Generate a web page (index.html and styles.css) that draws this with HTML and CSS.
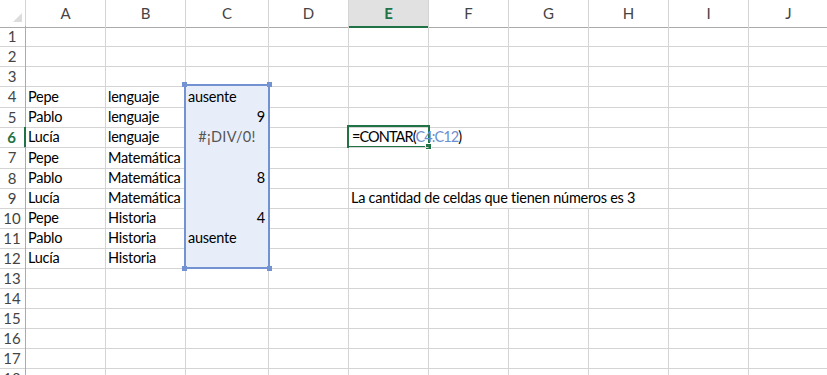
FILE: index.html
```html
<!DOCTYPE html>
<html lang="es">
<head>
<meta charset="utf-8">
<title>Hoja1</title>
<link rel="stylesheet" href="styles.css">
</head>
<body>
<div class="sheet">
  <div class="row head">
    <div class="corner"><svg width="26" height="26" viewBox="0 0 26 26"><polygon points="13,22 22,22 22,13" fill="#dcdcdc"/></svg></div>
    <div class="ch">A</div><div class="ch">B</div><div class="ch">C</div><div class="ch">D</div>
    <div class="ch on">E</div><div class="ch">F</div><div class="ch">G</div><div class="ch">H</div>
    <div class="ch">I</div><div class="ch">J</div>
  </div>

  <div class="row"><div class="rh">1</div><div class="c"></div><div class="c"></div><div class="c"></div><div class="c"></div><div class="c"></div><div class="c"></div><div class="c"></div><div class="c"></div><div class="c"></div><div class="c"></div></div>
  <div class="row"><div class="rh">2</div><div class="c"></div><div class="c"></div><div class="c"></div><div class="c"></div><div class="c"></div><div class="c"></div><div class="c"></div><div class="c"></div><div class="c"></div><div class="c"></div></div>
  <div class="row"><div class="rh">3</div><div class="c"></div><div class="c"></div><div class="c"></div><div class="c"></div><div class="c"></div><div class="c"></div><div class="c"></div><div class="c"></div><div class="c"></div><div class="c"></div></div>
  <div class="row tall"><div class="rh">4</div><div class="c">Pepe</div><div class="c">lenguaje</div><div class="c sel">ausente</div><div class="c"></div><div class="c"></div><div class="c"></div><div class="c"></div><div class="c"></div><div class="c"></div><div class="c"></div></div>
  <div class="row"><div class="rh">5</div><div class="c">Pablo</div><div class="c">lenguaje</div><div class="c sel num">9</div><div class="c"></div><div class="c"></div><div class="c"></div><div class="c"></div><div class="c"></div><div class="c"></div><div class="c"></div></div>
  <div class="row"><div class="rh on">6</div><div class="c">Lucía</div><div class="c">lenguaje</div><div class="c sel err">#¡DIV/0!</div><div class="c"></div><div class="c spill formula">=CONTAR(<span class="ref">C4:C12</span>)</div><div class="c"></div><div class="c"></div><div class="c"></div><div class="c"></div><div class="c"></div></div>
  <div class="row tall"><div class="rh">7</div><div class="c">Pepe</div><div class="c">Matemática</div><div class="c sel"></div><div class="c"></div><div class="c"></div><div class="c"></div><div class="c"></div><div class="c"></div><div class="c"></div><div class="c"></div></div>
  <div class="row"><div class="rh">8</div><div class="c">Pablo</div><div class="c">Matemática</div><div class="c sel num">8</div><div class="c"></div><div class="c"></div><div class="c"></div><div class="c"></div><div class="c"></div><div class="c"></div><div class="c"></div></div>
  <div class="row"><div class="rh">9</div><div class="c">Lucía</div><div class="c">Matemática</div><div class="c sel"></div><div class="c"></div><div class="c spill">La cantidad de celdas que tienen números es 3</div><div class="c spill"></div><div class="c spill"></div><div class="c"></div><div class="c"></div><div class="c"></div></div>
  <div class="row"><div class="rh">10</div><div class="c">Pepe</div><div class="c">Historia</div><div class="c sel num">4</div><div class="c"></div><div class="c"></div><div class="c"></div><div class="c"></div><div class="c"></div><div class="c"></div><div class="c"></div></div>
  <div class="row"><div class="rh">11</div><div class="c">Pablo</div><div class="c">Historia</div><div class="c sel">ausente</div><div class="c"></div><div class="c"></div><div class="c"></div><div class="c"></div><div class="c"></div><div class="c"></div><div class="c"></div></div>
  <div class="row"><div class="rh">12</div><div class="c">Lucía</div><div class="c">Historia</div><div class="c sel"></div><div class="c"></div><div class="c"></div><div class="c"></div><div class="c"></div><div class="c"></div><div class="c"></div><div class="c"></div></div>
  <div class="row"><div class="rh">13</div><div class="c"></div><div class="c"></div><div class="c"></div><div class="c"></div><div class="c"></div><div class="c"></div><div class="c"></div><div class="c"></div><div class="c"></div><div class="c"></div></div>
  <div class="row"><div class="rh">14</div><div class="c"></div><div class="c"></div><div class="c"></div><div class="c"></div><div class="c"></div><div class="c"></div><div class="c"></div><div class="c"></div><div class="c"></div><div class="c"></div></div>
  <div class="row"><div class="rh">15</div><div class="c"></div><div class="c"></div><div class="c"></div><div class="c"></div><div class="c"></div><div class="c"></div><div class="c"></div><div class="c"></div><div class="c"></div><div class="c"></div></div>
  <div class="row"><div class="rh">16</div><div class="c"></div><div class="c"></div><div class="c"></div><div class="c"></div><div class="c"></div><div class="c"></div><div class="c"></div><div class="c"></div><div class="c"></div><div class="c"></div></div>
  <div class="row"><div class="rh">17</div><div class="c"></div><div class="c"></div><div class="c"></div><div class="c"></div><div class="c"></div><div class="c"></div><div class="c"></div><div class="c"></div><div class="c"></div><div class="c"></div></div>
  <div class="row"><div class="rh">18</div><div class="c"></div><div class="c"></div><div class="c"></div><div class="c"></div><div class="c"></div><div class="c"></div><div class="c"></div><div class="c"></div><div class="c"></div><div class="c"></div></div>

  <!-- highlighted reference range C4:C12 -->
  <div class="range-box">
    <span class="knob tl"></span><span class="knob tr"></span>
    <span class="knob bl"></span><span class="knob br"></span>
  </div>
  <!-- active cell E6 -->
  <div class="active-box"><span class="fill-handle"></span></div>
</div>
</body>
</html>
```

FILE: styles.css
```css
html, body {
  margin: 0;
  padding: 0;
  background: #fff;
  overflow: hidden;
}

.sheet {
  position: relative;
  width: 827px;
  height: 375px;
  overflow: hidden;
  font-family: Lato, "Liberation Sans", sans-serif;
  font-size: 14.5px;
  letter-spacing: -0.25px;
  color: #000;
}

.row {
  display: grid;
  grid-template-columns: 26px 80px 80px 83px repeat(7, 80px);
  height: 20px;
}
.row.tall { height: 21px; }

.row.head {
  height: 26px;
}

.corner {
  border-right: 1px solid #d4d4d4;
  border-bottom: 1px solid #ababab;
  box-sizing: border-box;
}
.corner svg { display: block; }

.ch {
  box-sizing: border-box;
  border-right: 1px solid #d4d4d4;
  border-bottom: 1px solid #ababab;
  text-align: center;
  line-height: 27px;
  font-size: 15px;
  letter-spacing: 0;
  color: #444;
}
.ch.on {
  background: #e1e1e1;
  color: #217346;
  font-weight: 700;
  border-bottom: 2px solid #217346;
  line-height: 26px;
}

.rh {
  box-sizing: border-box;
  border-right: 1px solid #ababab;
  border-bottom: 1px solid #d4d4d4;
  text-align: center;
  color: #444;
  font-size: 15px;
  letter-spacing: 0;
  line-height: 20px;
  padding-right: 1px;
}
.rh.on {
  color: #217346;
  font-weight: 700;
  border-right: 2px solid #217346;
}

.c {
  box-sizing: border-box;
  border-right: 1px solid #d4d4d4;
  border-bottom: 1px solid #d4d4d4;
  padding: 0 2px;
  line-height: 20px;
  white-space: nowrap;
  overflow: visible;
  position: relative;
}
.tall .c, .tall .rh { line-height: 21px; }

.c.sel { background: #e8eef9; }
.c.num { text-align: right; padding-right: 3px; }
.c.err { text-align: center; color: #555; letter-spacing: 0.3px; }
.c.spill { border-right-color: transparent; z-index: 2; }
.c.formula { letter-spacing: -0.9px; padding-left: 3px; }

.ref { color: #6d8fd0; }

.range-box {
  position: absolute;
  left: 184px;
  top: 84px;
  width: 82px;
  height: 181px;
  border: 2px solid #7292d2;
  pointer-events: none;
}
.knob {
  position: absolute;
  width: 5px;
  height: 5px;
  background: #7292d2;
}
.knob.tl { left: -4px; top: -4px; }
.knob.tr { right: -4px; top: -4px; }
.knob.bl { left: -4px; bottom: -4px; }
.knob.br { right: -4px; bottom: -4px; }

.active-box {
  position: absolute;
  left: 347px;
  top: 125px;
  width: 79px;
  height: 19px;
  border: 2px solid #217346;
  z-index: 1;
  pointer-events: none;
}
.fill-handle {
  position: absolute;
  right: -4px;
  bottom: -4px;
  width: 5px;
  height: 5px;
  background: #217346;
  border: 1px solid #fff;
}
```
